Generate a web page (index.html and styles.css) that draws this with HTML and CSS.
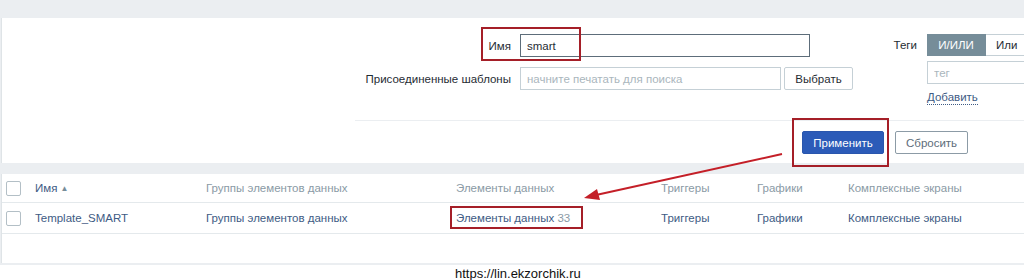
FILE: index.html
```html
<!DOCTYPE html>
<html>
<head>
  <meta charset="UTF-8">
  <title>Шаблоны</title>
  <link rel="stylesheet" href="styles.css">
</head>
<body>
  <div class="page">
    <!-- filter -->
    <div class="filter">
      <div class="filter-form">
        <div class="fields">
          <label class="lbl">Имя</label>
          <div><input class="txt txt-name" type="text" value="smart"></div>
          <label class="lbl">Присоединенные шаблоны</label>
          <div class="multi">
            <input class="txt txt-tpl" type="text" placeholder="начните печатать для поиска">
            <button class="btn btn-select">Выбрать</button>
          </div>
        </div>
        <div class="tags">
          <label class="lbl">Теги</label>
          <div class="toggle">
            <span class="seg seg-on">И/ИЛИ</span><span class="seg">Или</span>
          </div>
          <span></span>
          <input class="txt txt-tag" type="text" placeholder="тег">
          <span></span>
          <div><a class="add-link" href="#">Добавить</a></div>
        </div>
      </div>
      <div class="filter-actions">
        <button class="btn btn-main">Применить</button>
        <button class="btn btn-alt">Сбросить</button>
      </div>
    </div>

    <!-- list -->
    <div class="list">
      <table class="grid">
        <colgroup>
          <col style="width:28px"><col style="width:171px"><col style="width:250px">
          <col style="width:205px"><col style="width:96px"><col style="width:91px"><col>
        </colgroup>
        <thead>
          <tr>
            <th class="cb-cell"><span class="cb"></span></th>
            <th><a class="link" href="#">Имя</a> <span class="sort">&#9650;</span></th>
            <th>Группы элементов данных</th>
            <th>Элементы данных</th>
            <th>Триггеры</th>
            <th>Графики</th>
            <th>Комплексные экраны</th>
          </tr>
        </thead>
        <tbody>
          <tr>
            <td class="cb-cell"><span class="cb"></span></td>
            <td><a class="link" href="#">Template_SMART</a></td>
            <td><a class="link" href="#">Группы элементов данных</a></td>
            <td><a class="link" href="#">Элементы данных</a> <sup class="count">33</sup></td>
            <td><a class="link" href="#">Триггеры</a></td>
            <td><a class="link" href="#">Графики</a></td>
            <td><a class="link" href="#">Комплексные экраны</a></td>
          </tr>
        </tbody>
      </table>
    </div>
  </div>
  <div class="footer">https://lin.ekzorchik.ru</div>

  <!-- annotations drawn over the screenshot -->
  <div class="mark mark-name"></div>
  <div class="mark mark-apply"></div>
  <div class="mark mark-items"></div>
  <svg class="arrow" width="1024" height="280" viewBox="0 0 1024 280">
    <line x1="782" y1="154" x2="596" y2="195" stroke="#c41f28" stroke-width="2"/>
    <polygon points="584,198 597,189 600,200" fill="#c41f28"/>
  </svg>
</body>
</html>
```

FILE: styles.css
```css
html, body {
  margin: 0;
  padding: 0;
  overflow: hidden;
}
body {
  width: 1024px;
  height: 280px;
  font-family: "Liberation Sans", Arial, sans-serif;
  font-size: 11.5px;
  color: #1f2c33;
  background: #fff;
  position: relative;
}

.page {
  background: #ebeef1;
  padding: 18px 0 2px 0;
}

/* filter */
.filter {
  margin-left: 1px;
  border-left: 1px solid #dfe4e7;
  background: #fff;
  height: 145px;
  overflow: hidden;
}
.filter-form {
  margin-left: 353px;
  height: 102px;
  border-bottom: 1px solid #ebeef1;
  display: flex;
}
.fields {
  display: grid;
  grid-template-columns: 165px auto;
  grid-auto-rows: 23px;
  row-gap: 10px;
  padding-top: 16px;
  align-items: center;
}
.lbl {
  text-align: right;
  padding-right: 9px;
  white-space: nowrap;
}
.txt {
  box-sizing: border-box;
  height: 23px;
  margin: 0;
  padding: 0 6px;
  border: 1px solid #c5d0d6;
  font-family: inherit;
  font-size: 11.5px;
  color: #1f2c33;
  background: #fff;
  display: block;
}
.txt::placeholder { color: #aab6bd; }
.txt-name { width: 290px; border-color: #5d6d7a; }
.txt-tpl { width: 261px; }
.multi { display: flex; gap: 3px; }

.btn {
  box-sizing: border-box;
  height: 23px;
  margin: 0;
  padding: 0 10px;
  font-family: inherit;
  font-size: 11.5px;
  border-radius: 2px;
  cursor: pointer;
}
.btn-select {
  width: 69px;
  background: #fff;
  border: 1px solid #c5d0d6;
  color: #1f2c33;
}
.btn-main {
  width: 82px;
  background: #2c5bb8;
  border: 1px solid #2a56ad;
  color: #fff;
}
.btn-alt {
  width: 73px;
  background: #fff;
  border: 1px solid #8c9ba6;
  color: #5d6d7a;
}

.tags {
  display: grid;
  grid-template-columns: 64px 200px;
  column-gap: 10px;
  padding-top: 16px;
  align-content: start;
  align-items: center;
}
.tags .lbl { padding-right: 0; }
.toggle { display: flex; height: 22px; }
.seg {
  box-sizing: border-box;
  height: 22px;
  line-height: 20px;
  padding: 0 10px;
  border: 1px solid #c5d0d6;
  border-left: none;
  background: #fff;
  color: #1f2c33;
}
.seg-on {
  width: 59px;
  text-align: center;
  background: #768d99;
  border-color: #768d99;
  color: #fff;
}
.txt-tag { width: 200px; margin-top: 5px; }
.add-link {
  display: inline-block;
  margin-top: 7px;
  color: #3e5b84;
  text-decoration: none;
  border-bottom: 1px dotted #3e5b84;
  line-height: 13px;
}

.filter-actions {
  display: flex;
  gap: 11px;
  padding: 10px 0 0 800px;
}

/* list */
.list {
  margin: 11px 0 0 1px;
  border-left: 1px solid #dfe4e7;
  background: #fff;
  height: 89px;
}
.grid {
  table-layout: fixed;
  width: 1022px;
  border-collapse: collapse;
}
.grid th, .grid td {
  padding: 0 0 0 5px;
  text-align: left;
  white-space: nowrap;
  border-bottom: 1px solid #e4e9ec;
}
.grid th {
  height: 28px;
  font-weight: normal;
  color: #8a9aa5;
}
.grid td { height: 30px; }
.grid .cb-cell { padding-left: 4px; }
.cb {
  display: block;
  box-sizing: border-box;
  width: 15px;
  height: 15px;
  border: 1px solid #b3bfc6;
  border-radius: 2px;
  background: #fff;
}
.link {
  color: #3e5b84;
  text-decoration: none;
}
.sort {
  font-size: 8px;
  color: #768d99;
  vertical-align: 1px;
}
.count {
  font-size: 11.5px;
  color: #8a9aa5;
  vertical-align: baseline;
}

.footer {
  padding: 1px 0 0 455px;
  font-size: 13px;
  color: #111;
}

/* red annotation frames */
.mark {
  position: absolute;
  box-sizing: border-box;
  border: 2px solid #a51f28;
}
.mark-name  { left: 481px; top: 27px;  width: 100px; height: 34px; }
.mark-apply { left: 792px; top: 118px; width: 97px;  height: 49px; }
.mark-items { left: 450px; top: 206px; width: 133px; height: 23px; }
.arrow {
  position: absolute;
  left: 0;
  top: 0;
  pointer-events: none;
}
```
